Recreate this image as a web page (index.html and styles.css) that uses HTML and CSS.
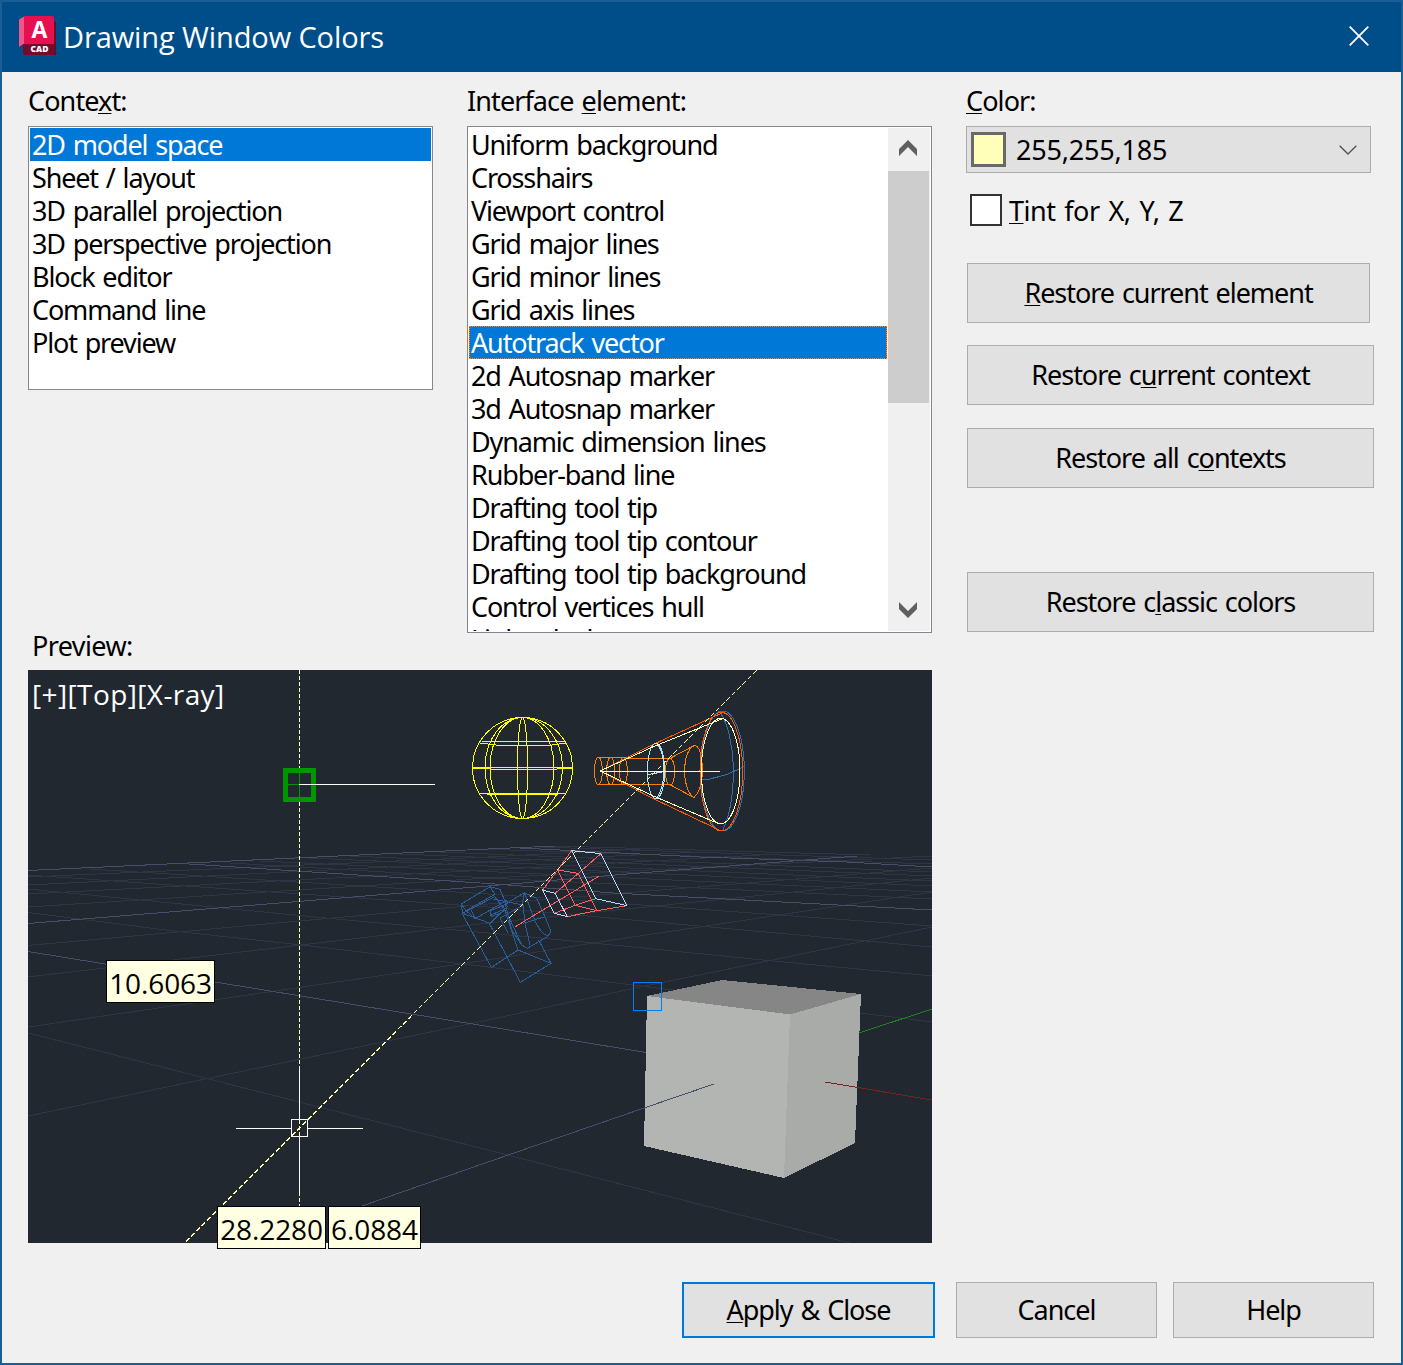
FILE: index.html
```html
<!DOCTYPE html>
<html lang="en">
<head>
<meta charset="utf-8">
<title>Drawing Window Colors</title>
<link rel="stylesheet" href="styles.css">
</head>
<body>
<div class="dialog">
  <header class="titlebar">
    <svg class="app-icon" width="38" height="42" viewBox="0 0 38 42">
      <path d="M0 4.500 6 1V28L0 32Z" fill="#f0568a"/>
      <path d="M34 6l3 1v33h-3z" fill="#6b0a26"/>
      <path d="M5 2q0-1 2-1h26q2 0 2 2v27H5z" fill="#e51050"/>
      <path d="M0 32l5-3h30v11H6q-2 0-2-2v-8z" fill="#750a2a"/>
      <text class="icon-a" x="20.500" y="22.500" text-anchor="middle">A</text>
      <text class="icon-cad" x="20.500" y="37.200" text-anchor="middle">CAD</text>
    </svg>
    <h1 class="title">Drawing Window Colors</h1>
    <button class="close" aria-label="Close"><svg width="20" height="20" viewBox="0 0 20 20"><path d="M.7.7l18.600 18.600M19.300.7L.7 19.300" stroke="#fff" stroke-width="1.800"/></svg></button>
  </header>
  <main class="content">
    <section class="left">
      <div class="lists">
        <div>
          <div class="label">Conte<u>x</u>t:</div>
          <ul class="list context">
            <li class="selected">2D model space</li><li>Sheet / layout</li><li>3D parallel projection</li><li>3D perspective projection</li><li>Block editor</li><li>Command line</li><li>Plot preview</li>
          </ul>
        </div>
        <div>
          <div class="label">Interface <u>e</u>lement:</div>
          <div class="list elements">
            <ul class="items">
              <li>Uniform background</li><li>Crosshairs</li><li>Viewport control</li><li>Grid major lines</li><li>Grid minor lines</li><li>Grid axis lines</li><li class="selected focus">Autotrack vector</li><li>2d Autosnap marker</li><li>3d Autosnap marker</li><li>Dynamic dimension lines</li><li>Rubber-band line</li><li>Drafting tool tip</li><li>Drafting tool tip contour</li><li>Drafting tool tip background</li><li>Control vertices hull</li><li>Light glyphs</li>
            </ul>
            <div class="scrollbar">
              <svg class="arrow" width="18" height="16" viewBox="0 0 18 16"><path d="M0 9 9 0l9 9v7L9 7 0 16z" fill="#606060"/></svg>
              <div class="thumb"></div>
              <svg class="arrow down" width="18" height="16" viewBox="0 0 18 16"><path d="M0 0l9 9 9-9v7l-9 9-9-9z" fill="#606060"/></svg>
            </div>
          </div>
        </div>
      </div>
      <div class="label preview-label">Preview:</div>
      <div class="preview">
        <svg class="scene" width="904" height="573" viewBox="28 670 904 573" shape-rendering="crispEdges" fill="none">
          <g stroke="#303546">
            <path d="M28 1116L488 1020 640 987 763 962 932 927M28 1027L488 960 593 943 693 928 932 892M28 977L301 945 488 923 932 878M28 945.500L488 904 932 868M28 907L488 878 932 856M28 894L488 870 760 855M28 885L488 862 700 852M28 877L488 857 640 849"/>
            <path d="M28 1033L488 1150 850 1243M28 912.500L174 931 301 945 488 967 673 990M860 1013L932 1022M28 889L315 917 488 933 593 943 763 960 932 976M28 875L488 907 932 947M90 869L488 894 932 926M230 863L488 878 932 899M260 861L932 892M310 858L932 886M350 856L932 881M400 854L932 876M440 852L932 872M480 849L932 864M540 847L932 860M555 846L870 855"/>
          </g>
          <g stroke="#484d6a">
            <path d="M28 870.500L488 849 555 846M174 863L488 883.500 613 893 932 910M28 923.500L488 886 627 874 767 863 857 856M28 951.500L105 964 215 982 488 1026.500 646 1052.500M362 1206L488 1162 644 1108M520 848L700 857 847 862 932 867"/>
          </g>
          <path d="M299.500 670V1206" stroke="#ffffb9" stroke-dasharray="4 2"/>
          <path d="M859 1033L932 1009" stroke="#228022"/>

          <g stroke="none">
            <path d="M647 996L722 980 861 994 791 1015z" fill="#868686"/>
            <path d="M647 996L790.500 1014.500 784 1178 644 1146z" fill="#b3b5b2"/>
            <path d="M790 1014.500L861 994 855 1143 784 1178z" fill="#a9aba8"/>
          </g>
          <path d="M644 1108L714 1084" stroke="#484d6a"/>
          <path d="M825 1082L932 1100" stroke="#7d2023"/>
          <rect x="633.500" y="982.500" width="28" height="28" stroke="#0a7cf0"/>

          <g stroke="#ffff00">
            <ellipse cx="522.500" cy="768" rx="50" ry="50.500"/>
            <ellipse cx="522.500" cy="768" rx="5" ry="50.500"/>
            <path d="M522.500 717.500A37.500 50.500 0 0 0 522.500 818.500M522.500 717.500A32.500 50.500 0 0 0 522.500 818.500M522.500 717.500A31.500 50.500 0 0 1 522.500 818.500M522.500 717.500A40 50.500 0 0 1 522.500 818.500"/>
            <path d="M482 741.500H564M480 743L500 745.500H548L566 743M472.500 768L500 769.500H550L572.500 768M472.500 768L500 767.500H550L572.500 768M480 793.500H566M487 794.500H558"/>
          </g>

          <g class="wire" transform="translate(450 690) scale(.333333)">
            <g stroke="#306eb0">
              <ellipse cx="818" cy="243" rx="65" ry="180"/>
              <path d="M810 67C835 100 850 175 850 245S842 370 818 422M752 268H775L830 254 884 229"/>
            </g>
            <g stroke="#ff8000">
              <ellipse cx="445" cy="243" rx="12" ry="41"/><ellipse cx="482" cy="243" rx="12" ry="41"/><ellipse cx="520" cy="243" rx="12" ry="41"/>
              <path d="M445 202H515L550 205H660M445 284H660M660 205L734 166M660 284L732 323"/>
              <ellipse cx="660" cy="245" rx="14" ry="40"/>
              <path d="M734 166C715 175 704 205 704 245S718 315 732 323C745 310 757 285 757 245S752 170 734 166"/>
            </g>
            <path d="M450 243L610 163 820 67M450 243L610 326 812 422" stroke="#ff5a0a"/>
            <ellipse cx="814" cy="245" rx="64" ry="178" stroke="#ff5a0a"/>
            <g stroke="#b0e4f5"><ellipse cx="618" cy="243" rx="26" ry="83"/><path d="M620 160C648 190 650 290 618 326M594 254L645 244"/></g>
            <path d="M450 243L610 170 820 85M450 243L610 318 808 402M450 244H810" stroke="#ffffb9"/>
            <ellipse cx="812" cy="243" rx="58" ry="158" stroke="#ffffb9"/>
          </g>

          <g class="wire" transform="translate(440 830) scale(.333333)">
            <g stroke="#285f9b">
              <path d="M64 222L150 170 180 178 202 230 150 280 68 250ZM64 222L78 242 164 193 150 170M68 250L164 200 190 235M78 242L106 266 202 210M90 235L106 266M160 207L250 225M148 280L241 457 333 400 234 360 154 412 66 250M148 280L241 457M190 228L234 360M150 243L205 220M150 256L200 235M150 243L155 260 200 240M180 265L250 225M180 265L205 310"/>
              <path d="M196 222L253 188 290 205 315 260 333 305 322 320 262 355 245 345 215 300zM253 188L248 215 255 280 270 345M253 188L280 260C295 300 315 320 325 315M200 245L220 290 245 345 262 355M250 280L315 260M296 330L333 400"/>
            </g>
            <g stroke="#ff5f5f">
              <path d="M395 62L353 120 308 180M353 120L415 130 483 71M415 130L345 190M353 120L405 226 470 242 415 130M405 226L467 206M405 226L343 250M382 260L470 242 561 227M226 290L476 139"/>
            </g>
            <g stroke="#b5d9fb">
              <path d="M395 62L483 71 561 227 467 206zM308 180L345 190 382 260 343 250z"/>
            </g>
          </g>
          <path d="M756.500 670.500L184.500 1243" stroke="#ffffa8" stroke-dasharray="5 2.500"/>

          <path d="M299.500 1066V1119M299.500 1137V1192M236 1128.500H291M308 1128.500H363" stroke="#fff"/>
          <rect x="291.500" y="1119.500" width="16" height="17" stroke="#fff"/>
          <rect x="285.500" y="770.500" width="28" height="28.500" stroke="#009600" stroke-width="5"/>
          <path d="M299.500 773V797M288 784.500H299" stroke="#009600"/>
          <path d="M299 784.500H435" stroke="#fff"/>
        </svg>
        <div class="viewport-label">[+][Top][X-ray]</div>
        <div class="tip tip-distance">10.6063</div>
        <div class="tip tip-x">28.2280</div>
        <div class="tip tip-y">6.0884</div>
      </div>
    </section>
    <section class="right">
      <div class="label"><u>C</u>olor:</div>
      <div class="combo">
        <span class="swatch"></span><span class="value">255,255,185</span>
        <svg width="18" height="10" viewBox="0 0 18 10"><path d="M.7.7L9 9 17.300.7" fill="none" stroke="#505050" stroke-width="1.300"/></svg>
      </div>
      <label class="check"><span class="box"></span><span class="check-text"><u>T</u>int for X, Y, Z</span></label>
      <button class="btn restore-element"><u>R</u>estore current element</button>
      <button class="btn restore-context">Restore c<u>u</u>rrent context</button>
      <button class="btn restore-all">Restore all c<u>o</u>ntexts</button>
      <button class="btn restore-classic">Restore c<u>l</u>assic colors</button>
    </section>
  </main>
  <footer class="actions">
    <button class="btn default"><u>A</u>pply &amp; Close</button>
    <button class="btn cancel">Cancel</button>
    <button class="btn help">Help</button>
  </footer>
</div>
</body>
</html>
```
FILE: styles.css
```css
* { box-sizing: border-box; }
body {
  margin: 0;
  font-family: "Noto Sans", sans-serif;
  font-size: 27px;
  letter-spacing: -1.15px;
  word-spacing: 2px;
  color: #000;
}
u { text-decoration-thickness: 1px; text-underline-offset: 2px; text-decoration-skip-ink: none; }
ul { list-style: none; margin: 0; padding: 0; }
button { font: inherit; letter-spacing: inherit; word-spacing: inherit; color: inherit; padding: 0; }
svg { display: block; }

.dialog {
  width: 1403px;
  height: 1365px;
  border: 2px solid #1a5e96;
  background: #f0f0f0;
  display: flex;
  flex-direction: column;
}
.titlebar {
  height: 70px;
  flex: none;
  background: #004e89;
  color: #fff;
  display: flex;
  align-items: center;
  padding: 0 32px 0 17px;
}
.app-icon { margin-top: -2px; }
.icon-a { font: 700 23px "Open Sans", sans-serif; fill: #fff; letter-spacing: 0; }
.icon-cad { font: 800 8.5px "Open Sans", sans-serif; fill: #fff; letter-spacing: 0; }
.title {
  flex: 1;
  margin: 0 0 0 6px;
  font: 400 29px/40px "Open Sans", sans-serif;
  letter-spacing: -0.1px;
  word-spacing: 0;
}
.close { background: none; border: 0; margin-top: -2px; }

.content { display: flex; gap: 34px; padding-left: 26px; }
.left { width: 904px; }
.lists { display: grid; grid-template-columns: 405px 465px; gap: 34px; }
.label { height: 54px; line-height: 58px; white-space: nowrap; letter-spacing: -0.9px; }
.list { background: #fff; border: 1px solid #828790; padding: 1px; }
.context { height: 264px; }
.elements { height: 507px; display: flex; }
.items { flex: 1; overflow: hidden; }
.list li { height: 33px; line-height: 34px; padding-left: 2px; white-space: nowrap; }
.list .selected { background: #0078d7; color: #fff; }
.list .focus { outline: 1px dotted #ff8728; outline-offset: -1px; margin-right: 1px; }
.scrollbar {
  width: 42px;
  background: #f0f0f0;
  display: flex;
  flex-direction: column;
}
.arrow { margin: 12px 0 15px 11px; flex: none; }
.arrow.down { margin: auto 0 13px 11px; }
.thumb { width: 41px; height: 232px; background: #cdcdcd; }

.preview-label { height: 37px; line-height: 26px; padding-left: 4px; letter-spacing: -0.6px; }
.preview { position: relative; width: 904px; height: 573px; background: #22282f; }
.wire * { vector-effect: non-scaling-stroke; }
.viewport-label {
  position: absolute;
  left: 4px;
  top: 6px;
  color: #fff;
  font: 28px/36px "Open Sans", sans-serif;
  letter-spacing: 0.4px;
}
.tip {
  position: absolute;
  height: 43px;
  border: 1px solid #000;
  background: #ffffe1;
  font: 28px/44px "Open Sans", sans-serif;
  letter-spacing: -0.1px;
  text-align: center;
}
.tip-distance { left: 78px; top: 290px; width: 109px; }
.tip-x { left: 189px; top: 536px; width: 109px; }
.tip-y { left: 300px; top: 536px; width: 93px; }

.right { width: 408px; display: flex; flex-direction: column; }
.combo {
  width: 405px;
  height: 47px;
  border: 1px solid #adadad;
  background: #e1e1e1;
  display: flex;
  align-items: center;
  padding: 0 13px 0 4px;
}
.swatch { width: 35px; height: 35px; border: 3px solid #696969; background: #ffffb9; }
.value { flex: 1; margin-left: 10px; letter-spacing: -0.2px; }
.check { display: flex; align-items: center; gap: 7px; height: 32px; margin: 21px 0 37px 4px; }
.check-text { letter-spacing: -0.5px; word-spacing: 2.4px; }
.box { width: 32px; height: 32px; border: 2px solid #333; background: #fff; }
.btn {
  height: 60px;
  border: 1px solid #adadad;
  background: #e1e1e1;
  white-space: nowrap;
  padding-bottom: 2px;
  letter-spacing: -1.05px;
}
.right .btn { margin-left: 1px; }
.restore-element { width: 403px; }
.restore-context { margin-top: 22px; }
.restore-all { margin-top: 23px; }
.restore-classic { margin-top: 84px; }

.actions { display: flex; margin: 39px 0 0 680px; }
.actions .btn { height: 56px; width: 201px; }
.actions .default { width: 253px; border: 2px solid #0078d7; }
.cancel { margin-left: 21px; }
.help { margin-left: 16px; }
```
